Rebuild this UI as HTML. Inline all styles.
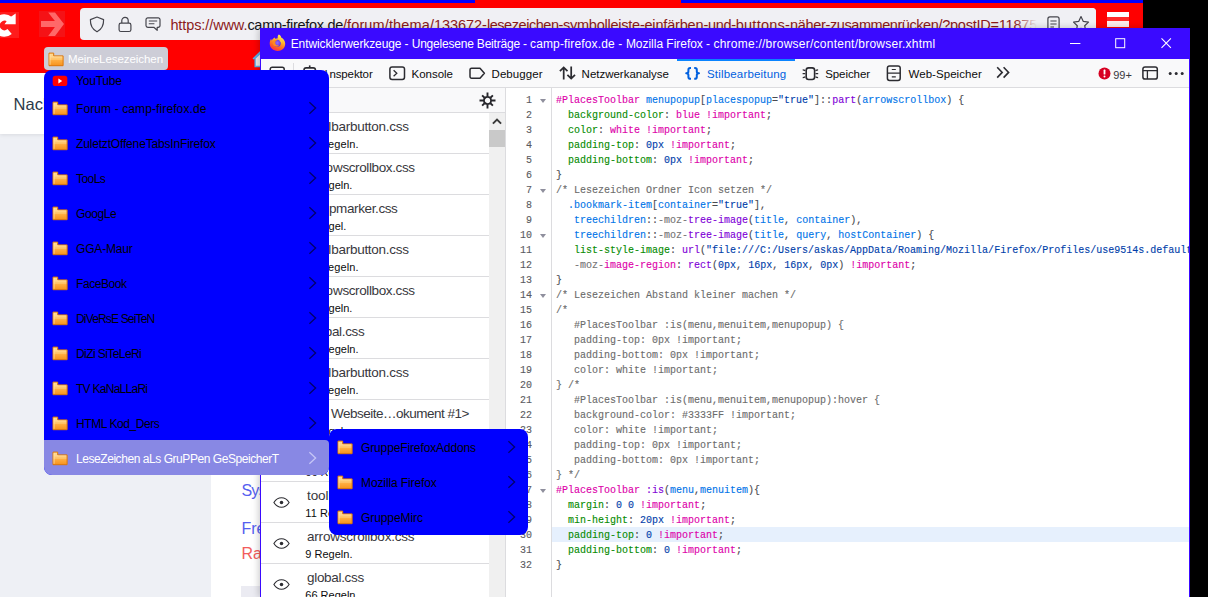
<!DOCTYPE html>
<html lang="de">
<head>
<meta charset="utf-8">
<title>Entwicklerwerkzeuge</title>
<style>
*{box-sizing:border-box;margin:0;padding:0}
html,body{width:1208px;height:597px;overflow:hidden;background:#000}
body{position:relative;font-family:"Liberation Sans",sans-serif;font-size:12px;color:#15141a}
.abs{position:absolute}
.t{position:absolute;white-space:nowrap;line-height:1}
/* ---------- main browser window ---------- */
#win{z-index:0;left:0;top:0;width:1143px;height:597px;background:#eef0f5;overflow:hidden}
#nav{left:0;top:0;width:1143px;height:73px;background:#ff0000}
.strip{top:0;height:3px;background:#0000ff}
#urlbar{left:80px;top:8px;width:1016px;height:32px;background:#f0f0f4;border-radius:4px;overflow:hidden}
#url{left:90.4px;top:9.6px;font-size:14.5px;color:#8b1a1a;letter-spacing:0}
#url b{font-weight:normal;color:#15141a}
#bmbtn{left:44px;top:47px;width:124px;height:23px;background:#cdcdd7;border-radius:4px}
#bmtxt{left:24px;top:7px;font-size:11.5px;color:#fff}
#pagehead{left:0;top:72.500px;width:1143px;height:61.400px;background:#fff;box-shadow:0 1px 4px rgba(0,0,0,.09)}
#pagewhite{left:211px;top:134px;width:940px;height:470px;background:#fff}
/* ---------- menus ---------- */
.menu{z-index:2;background:#0000ff;border-radius:8px}
#m1{left:44px;top:70px;width:285px;height:405px}
#m2{left:329px;top:429px;width:199px;height:105.5px}
.mi{position:absolute;left:0;width:100%;height:35px}
.mi.hlt .lbl{color:#fff}
.mi .lbl{position:absolute;left:32px;top:11.2px;font-size:12px;line-height:14px;white-space:nowrap;color:#000}
.mi svg.f{position:absolute;left:8px;top:10px}
.mi svg.c{position:absolute;right:12px;top:10px}
#hl{left:0;top:370px;width:285px;height:35px;background:#8888e4;border-radius:0 4px 8px 8px}
/* ---------- devtools window ---------- */
#dt{z-index:1;left:260px;top:28px;width:930px;height:569px;background:#fff;border-left:1px solid #3a0aff;border-right:1px solid #3a0aff;overflow:hidden;box-shadow:-1px 0 7px rgba(0,0,0,.22)}
#dttitle{left:0;top:0;width:929px;height:31px;background:#3a0aff}
#dttitletxt{left:29.7px;top:10px;font-size:12px;color:#fff}
#dtbar{left:0;top:31px;width:929px;height:29px;background:#f9f9fa;border-bottom:1px solid #dcdcdf}
.tab{position:absolute;top:8px;font-size:11.5px;line-height:14px;white-space:nowrap;color:#0c0c0d}
#side{left:0;top:60px;width:244px;height:510px;background:#fff}
#sidehead{left:0;top:0;width:244px;height:25px;background:#f9f9fa;border-bottom:1px solid #dcdcdf}
#scroll{left:228px;top:25px;width:16px;height:485px;background:#f0f0f0}
#thumb{left:0;top:17px;width:16px;height:17px;background:#c9c9c9}
#gutter{left:244px;top:60px;width:47px;height:510px;background:#fff;border-left:1px solid #dcdcdf;border-right:1px solid #dcdcdf}
#code{left:291px;top:60px;width:638px;height:510px;background:#fff}
.row{position:absolute;left:0;width:228px;height:41px;border-bottom:1px solid #dcdcdf}
.row .n{position:absolute;left:46px;top:6px;font-size:13.5px;line-height:16px;white-space:nowrap;color:#38383d}
.row .r{position:absolute;left:44.3px;top:24.5px;font-size:11px;line-height:13px;white-space:nowrap;color:#0c0c0d}
.row svg{position:absolute;left:12px;top:15px}
pre{font-family:"Liberation Mono",monospace;font-size:10px;line-height:15px;-webkit-text-stroke:.12px currentColor}
#lines{position:absolute;left:0;top:5px;width:26px;text-align:right;color:#5a5a60}
#src{position:absolute;left:4px;top:5px;color:#4a4a4f}
.k{color:#dd00a9}.p{color:#058b00}.s{color:#0074e8}.a{color:#8000d7}.n{color:#003eaa}.d{color:#0c0c0d}.cm{color:#6c6c6c}.m{color:#737373}
.fold{position:absolute;left:34px;width:0;height:0;border-left:3px solid transparent;border-right:3px solid transparent;border-top:4px solid #8f8f9d}
#curline{left:0;top:439px;width:638px;height:15px;background:#e6f0fd}
#yt{letter-spacing:-0.194px}
#l0{letter-spacing:0.107px}
#l1{letter-spacing:-0.168px}
#l2{letter-spacing:-0.546px}
#l3{letter-spacing:-0.384px}
#l4{letter-spacing:-0.164px}
#l5{letter-spacing:-0.429px}
#l6{letter-spacing:-0.839px}
#l7{letter-spacing:-0.576px}
#l8{letter-spacing:-0.729px}
#l9{letter-spacing:-0.432px}
#l10{letter-spacing:-0.441px}
#s0{letter-spacing:-0.127px}
#s1{letter-spacing:-0.111px}
#s2{letter-spacing:-0.089px}
#t2{letter-spacing:-0.023px}
#t3{letter-spacing:0.086px}
#t4{letter-spacing:-0.012px}
#t5{letter-spacing:0.178px}
#t6{letter-spacing:-0.074px}
#t7{letter-spacing:0.054px}
#r10{letter-spacing:0.012px}
#u1{letter-spacing:-0.098px}
#u2{letter-spacing:-0.289px}
#u3{letter-spacing:0.101px}
#u4{letter-spacing:0.159px}
#u6{letter-spacing:-0.241px}
#r0{letter-spacing:0.101px}
#r3{letter-spacing:0.101px}
#r6{letter-spacing:0.101px}
#r9{letter-spacing:0.101px}
#bmtxt{letter-spacing:-0.057px}
#t1{letter-spacing:-0.114px}
#w1{letter-spacing:-0.108px}
#w2{letter-spacing:-0.202px}
#w3{letter-spacing:0.14px}
#w4{letter-spacing:-0.029px}
#w5{letter-spacing:0.246px}
#ua{letter-spacing:-0.044px}
#ub{letter-spacing:-0.443px}
#uc{letter-spacing:-0.239px}
#ud{letter-spacing:-0.17px}
#ue{letter-spacing:-0.333px}
#uf{letter-spacing:0.237px}
#ug{letter-spacing:-0.32px}
#uh{letter-spacing:-0.438px}
#n0v{letter-spacing:-0.288px}
#n1v{letter-spacing:-0.381px}
#n2v{letter-spacing:-0.38px}
#n3v{letter-spacing:-0.288px}
#n4v{letter-spacing:-0.381px}
#n5v{letter-spacing:-0.319px}
#n6v{letter-spacing:-0.288px}
#n7v{letter-spacing:-0.498px}
#n10{letter-spacing:-0.202px}
#n11{letter-spacing:-0.315px}
#n9{letter-spacing:-0.083px}
#n8{letter-spacing:-0.315px}
#u7{letter-spacing:-0.15px}
</style>
</head>
<body>
<div id="win" class="abs">
  <div id="nav" class="abs"></div>
  <div class="abs" style="left:0;top:12px;width:19px;height:26px;background:#ff1c1c"></div>
  <svg class="abs" style="left:0;top:12px" width="19" height="26" viewBox="0 12 19 26"><path d="M9.64 19.4A8 8 0 1 0 9.64 31.6" fill="none" stroke="#fff" stroke-width="6.6"/><path d="M15.7 13.4V24.3H4.500L9 18z" fill="#fff"/></svg>
  <div class="abs" style="left:39px;top:11px;width:26px;height:26px;background:#f51216"></div>
  <svg class="abs" style="left:39px;top:11px" width="26" height="26" viewBox="39 11 26 26"><path d="M48.2 12.4H55L64 24.1L55 36H48.2L54.900 27.1H41V21.1H54.900z" fill="#ff6868"/></svg>

  <div class="abs strip" style="left:0;width:475px"></div>
  <div class="abs strip" style="left:681px;width:462px"></div>
  <div id="urlbar" class="abs"><div id="fade" class="abs" style="left:934px;top:0;width:28px;height:32px;background:linear-gradient(90deg,rgba(240,240,244,0),#f0f0f4 82%);z-index:2"></div><div class="abs" style="left:962px;top:0;width:54px;height:32px;background:#f0f0f4;z-index:2"></div>
<svg class="abs" style="left:8.5px;top:7.5px" width="16" height="17" viewBox="0 0 16 17"><path d="M8 1L14.6 3.6C14.8 9.4 12.4 13.6 8 15.8C3.6 13.6 1.2 9.4 1.4 3.6z" fill="none" stroke="#45454c" stroke-width="1.2" stroke-linejoin="round"/></svg>
<svg class="abs" style="left:37.5px;top:7.5px" width="14" height="17" viewBox="0 0 14 17"><rect x="1.1" y="7.1" width="11.8" height="8.4" rx="1.8" fill="none" stroke="#45454c" stroke-width="1.2"/><path d="M3.8 7V4.6a3.2 3.2 0 0 1 6.4 0V7" fill="none" stroke="#45454c" stroke-width="1.2"/></svg>
<svg class="abs" style="left:64.5px;top:8.5px" width="16" height="15" viewBox="0 0 16 15"><path d="M2.8 0.9h10.4a1.8 1.8 0 0 1 1.8 1.8v5.8a1.8 1.8 0 0 1-1.8 1.8h-1v3l-3.4-3H2.8a1.8 1.8 0 0 1-1.8-1.8V2.700a1.8 1.8 0 0 1 1.8-1.8z" fill="none" stroke="#45454c" stroke-width="1.2" stroke-linejoin="round"/><path d="M3.8 4h8.400M3.8 6.800h5.600" stroke="#45454c" stroke-width="1.1"/></svg>
<svg class="abs" style="z-index:3;left:966.600px;top:7.5px" width="13" height="17" viewBox="0 0 13 17"><rect x="0.9" y="0.9" width="11.2" height="14.800" rx="2" fill="none" stroke="#45454c" stroke-width="1.2"/><path d="M3.4 5h6.2M3.4 8h6.200M3.400 11h3.600" stroke="#45454c" stroke-width="1.1"/></svg>
<svg class="abs" style="z-index:3;left:991.600px;top:6.5px" width="18" height="18" viewBox="0 0 18 18"><path d="M9 1.600l2.300 4.800 5.200.700-3.800 3.600.95 5.200L9 13.400l-4.650 2.500.95-5.200-3.800-3.600 5.200-.7z" fill="none" stroke="#45454c" stroke-width="1.2" stroke-linejoin="round"/></svg>
<div id="url" class="t"><span id="u1">https://www.</span><b id="u2">camp-firefox.de</b><span id="u3">/forum</span><span id="u4">/thema</span><span id="ua">/133672-</span><span id="ub">lesezeichen-</span><span id="uc">symbolleiste-</span><span id="ud">einfärben-</span><span id="ue">und-</span><span id="uf">buttons-</span><span id="ug">näher-</span><span id="uh">zusammenrücken</span><span id="u6">/?postID=</span><span id="u7">11875</span></div></div>
  <div id="bmbtn" class="abs"><svg class="abs" style="left:3.700px;top:5px" width="17" height="15" viewBox="0 0 17 15"><path d="M1 1.100h4.700v2.800H15.100v9.800H1z" fill="url(#fg)" stroke="#dd7708" stroke-width="1" stroke-linejoin="round"/><path d="M2 2.200v10.600" stroke="#ffe9b4" stroke-width="0.900" opacity=".85"/><path d="M2.500 4.900H14.200" stroke="#ffe6b0" stroke-width="0.800" opacity=".7"/></svg><div id="bmtxt" class="t">MeineLesezeichen</div></div>
  <div class="abs" style="left:1106.800px;top:11.700px;width:21.800px;height:5.100px;background:#fff"></div>
  <div class="abs" style="left:1106.800px;top:16.800px;width:21.800px;height:4.200px;background:#ff2a2a"></div>
  <div class="abs" style="left:1106.800px;top:21px;width:21.800px;height:5.500px;background:#ffecec"></div>
  <svg class="abs" style="left:250px;top:46px" width="24" height="22" viewBox="250 46 24 22"><path d="M255.100 58.200v8.300h14.800v-8.300L262.500 51.200z" fill="#e9e9ee" stroke="#56b0ea" stroke-width="1.300"/><path d="M253.100 59L262.500 50L271.900 59" fill="none" stroke="#56b0ea" stroke-width="1.700"/></svg>
  <div id="pagehead" class="abs"><div class="t" style="left:13.6px;top:23.4px;font-size:16.5px;color:#2c3a4a">Nachrichten</div></div>
  <div id="pagewhite" class="abs"></div>
  <div class="t" style="left:241.400px;top:482.500px;font-size:16px;letter-spacing:-.7px;color:#5560f0">System</div>
  <div class="t" style="left:241.400px;top:521px;font-size:16px;color:#5560f0">Freigabe</div>
  <div class="t" style="left:241.400px;top:545.500px;font-size:16px;color:#f25c5c">Rang</div>
  <div class="abs" style="left:241.200px;top:585.500px;width:300px;height:20px;background:#ebebf2"></div>
</div>

<div id="dt" class="abs">
  <div id="dttitle" class="abs"><svg class="abs" style="left:7.800px;top:6px" width="17" height="18" viewBox="0 0 17 18"><defs><linearGradient id="fx1" x1="0.750" y1="0.050" x2="0.300" y2="1"><stop offset="0" stop-color="#fff060"/><stop offset="0.300" stop-color="#ffbd30"/><stop offset="0.600" stop-color="#ff7a22"/><stop offset="0.850" stop-color="#ff4a2e"/><stop offset="1" stop-color="#f5266a"/></linearGradient><radialGradient id="fx2" cx="0.500" cy="0.450" r="0.600"><stop offset="0" stop-color="#9a6bff"/><stop offset="1" stop-color="#5a2ed8"/></radialGradient></defs><path d="M9.800 0.600C11.200 1.200 12 2.400 12.200 3.400C14.400 4.400 16.200 6.800 16.200 9.800C16.200 14 12.800 17 8.600 17C4.200 17 0.700 13.800 0.700 9.600C0.700 7.400 1.400 5.800 2.200 4.800C2.200 5.600 2.400 6.200 2.800 6.600C3.400 5 4.600 3.800 5.800 3.400C5.800 4 6 4.400 6.400 4.800C7.200 4.400 8 4.200 8.800 4.200C8.400 3 8.800 1.600 9.800 0.600z" fill="url(#fx1)"/><circle cx="8.300" cy="9.300" r="3.500" fill="url(#fx2)"/><path d="M3.800 7.800C4.600 6 6.600 5.600 8.400 6.200C7.200 6.400 6.200 7.400 6.200 8.800C6.200 10.800 8.200 11.800 10 11.200C8.800 12.800 5.600 13 4.200 10.800C3.600 9.800 3.500 8.600 3.800 7.800z" fill="#ff8a1f"/><path d="M10.600 4.800C12.400 5.600 13.400 7.600 13 9.800C12.600 8.400 11.800 7.400 10.400 7C11 6.400 11 5.400 10.600 4.800z" fill="#ffcf3a"/></svg><svg class="abs" style="left:800px;top:0" width="129" height="31" viewBox="0 0 129 31"><path d="M9 15.500h10.400" stroke="#fff" stroke-width="1"/><rect x="54.700" y="10.700" width="9" height="9" fill="none" stroke="#fff" stroke-width="1"/><path d="M100.500 10.400l9.400 9.400M109.900 10.400l-9.400 9.400" stroke="#fff" stroke-width="1.100"/></svg><div id="dttitletxt" class="t"><span id="w1">Entwicklerwerkzeuge - </span><span id="w2">Ungelesene Beiträge - </span><span id="w3">camp-firefox.de - </span><span id="w4">Mozilla Firefox - </span><span id="w5">chrome://browser/content/browser.xhtml</span></div></div>
  <div id="dtbar" class="abs">
    <svg class="abs" style="left:7.8px;top:7px" width="17" height="16" viewBox="0 0 17 16"><path d="M15.2 8V3.2a2 2 0 0 0-2-2H3.2a2 2 0 0 0-2 2v8a2 2 0 0 0 2 2H8" fill="none" stroke="#2b2b30" stroke-width="1.5"/><path d="M9.5 8.5l6 2.4-2.6 1 2.6 2.8-1 1-2.7-2.8-1 2.5z" fill="#2b2b30"/></svg>
    <div class="abs" style="left:32px;top:4px;width:1px;height:20px;background:#dcdcdf"></div>
    <svg class="abs" style="left:42.400px;top:6px" width="14" height="17" viewBox="0 0 14 17"><path d="M6.700 0.400v2.400" stroke="#2b2b30" stroke-width="1.600"/><rect x="1" y="2.900" width="11.400" height="12.400" rx="2.200" fill="none" stroke="#2b2b30" stroke-width="1.600"/></svg>
    <div class="tab" style="left:auto;right:817.400px">I<span id="t1" style="margin-left:1.600px">nspektor</span></div>
    <svg class="abs" style="left:127.8px;top:7px" width="17" height="15" viewBox="0 0 17 15"><rect x="0.9" y="0.9" width="14.6" height="12.6" rx="2.2" fill="none" stroke="#2b2b30" stroke-width="1.5"/><path d="M4.6 4.2L7.8 7.2L4.6 10.2" fill="none" stroke="#2b2b30" stroke-width="1.3"/></svg>
    <div class="tab" id="t2" style="left:150.6px">Konsole</div>
    <svg class="abs" style="left:207.8px;top:8px" width="17" height="13" viewBox="0 0 17 13"><path d="M2.6 1.2h8.4l4.4 5l-4.4 5H2.6a1.6 1.6 0 0 1-1.6-1.6V2.8a1.6 1.6 0 0 1 1.6-1.6z" fill="none" stroke="#2b2b30" stroke-width="1.5" stroke-linejoin="round"/></svg>
    <div class="tab" id="t3" style="left:230.5px">Debugger</div>
    <svg class="abs" style="left:297.800px;top:7px" width="17" height="15" viewBox="0 0 17 15"><path d="M4.700 13.600V1.400M0.900 5.200l3.800-3.800l3.800 3.800M12.200 0.400v12.200M8.400 8.800l3.800 3.800l3.800-3.800" fill="none" stroke="#2b2b30" stroke-width="1.750"/></svg>
    <div class="tab" id="t4" style="left:320.6px">Netzwerkanalyse</div>
    <div class="abs" style="left:415.800px;top:0;width:118.200px;height:2px;background:#0a84ff"></div>
    <svg class="abs" style="left:424.100px;top:7.500px" width="16" height="13" viewBox="0 0 16 13"><path d="M6 1H5.200Q3.400 1 3.400 2.800V4.600Q3.400 6.350 1.200 6.350Q3.400 6.350 3.400 8.100V9.900Q3.400 11.700 5.200 11.700H6M9.200 1H10Q11.800 1 11.800 2.800V4.600Q11.800 6.350 14 6.350Q11.800 6.350 11.800 8.100V9.900Q11.800 11.700 10 11.700H9.200" fill="none" stroke="#0060df" stroke-width="2" stroke-linejoin="round"/></svg>
    <div class="tab" id="t5" style="left:446px;color:#0060df">Stilbearbeitung</div>
    <svg class="abs" style="left:541px;top:8px" width="17" height="14" viewBox="0 0 17 14"><rect x="4.2" y="0.9" width="8.4" height="11.6" rx="2.4" fill="none" stroke="#2b2b30" stroke-width="1.600"/><path d="M0.700 2.800q1.400 0 2.600 .8M0.600 6.700h2.700M0.700 10.600q1.400 0 2.600-.8M16.100 2.800q-1.400 0-2.600 .8M16.200 6.700h-2.700M16.100 10.600q-1.400 0-2.600-.8" fill="none" stroke="#2b2b30" stroke-width="1.300"/></svg>
    <div class="tab" id="t6" style="left:564.2px">Speicher</div>
    <svg class="abs" style="left:624.8px;top:6px" width="16" height="17" viewBox="0 0 16 17"><rect x="1.4" y="0.9" width="12.8" height="14.6" rx="2.2" fill="none" stroke="#2b2b30" stroke-width="1.5"/><path d="M1.4 8.2h12.8M5.800 4.500h4M5.800 11.900h4" stroke="#2b2b30" stroke-width="1.2"/></svg>
    <div class="tab" id="t7" style="left:647.5px">Web-Speicher</div>
    <svg class="abs" style="left:734.900px;top:7.400px" width="15" height="13" viewBox="0 0 15 13"><path d="M1.2 1.2l5 5.2l-5 5.2M7.6 1.2l5 5.2l-5 5.2" fill="none" stroke="#2b2b30" stroke-width="1.6"/></svg>
    <svg class="abs" style="left:836.8px;top:8px" width="13" height="13" viewBox="0 0 13 13"><circle cx="6.5" cy="6.5" r="6" fill="#d70022"/><rect x="5.6" y="2.6" width="1.8" height="5" rx=".6" fill="#fff"/><circle cx="6.5" cy="9.6" r="1" fill="#fff"/></svg>
    <div class="tab" id="t8" style="left:852.200px;font-size:11px;top:8.500px;color:#38383d">99+</div>
    <svg class="abs" style="left:880.600px;top:7px" width="17" height="15" viewBox="0 0 17 15"><rect x="0.9" y="0.9" width="14.4" height="12.2" rx="2.2" fill="none" stroke="#2b2b30" stroke-width="1.5"/><path d="M0.9 4.6h14.4M5.4 4.6v8.5" stroke="#2b2b30" stroke-width="1.3"/></svg>
    <svg class="abs" style="left:906.8px;top:12px" width="17" height="5" viewBox="0 0 17 5"><circle cx="2.2" cy="2.5" r="1.5" fill="#2b2b30"/><circle cx="8.2" cy="2.5" r="1.5" fill="#2b2b30"/><circle cx="14.2" cy="2.5" r="1.5" fill="#2b2b30"/></svg>

  </div>
  <div id="side" class="abs">
<div id="sidehead" class="abs"><svg class="abs" style="left:218.400px;top:3.500px" width="17" height="17" viewBox="0 0 17 17"><circle cx="8.500" cy="8.500" r="3.600" fill="none" stroke="#26262b" stroke-width="1.900"/><path d="M8.500 0.500v3.600M8.500 12.900v3.600M0.500 8.500h3.600M12.900 8.500h3.600M3.100 3.400l2.500 2.300M11.400 11.300l2.500 2.300M3.100 13.600l2.500-2.300M11.400 5.700l2.500-2.300" stroke="#26262b" stroke-width="1.900"/></svg></div>
<div id="scroll" class="abs"><svg class="abs" style="left:3px;top:5px" width="10" height="7" viewBox="0 0 10 7"><path d="M0.900 5.700L5 1.500L9.100 5.700" fill="none" stroke="#3a3a3a" stroke-width="1.900"/></svg><div id="thumb" class="abs"></div></div>
<div class="row" style="top:25px"><svg width="17" height="11" viewBox="0 0 17 11"><path d="M0.9 5.5C3 2.2 5.6 0.8 8.5 0.8S14 2.2 16.1 5.5C14 8.8 11.4 10.2 8.5 10.2S3 8.8 0.9 5.5z" fill="none" stroke="#2b2b30" stroke-width="1.1"/><circle cx="8.5" cy="5.5" r="1.750" fill="#2b2b30"/></svg><span class="n" style="left:auto;right:80.4px">tool<span id="n0v">barbutton.css</span></span><span class="r" id="r0">11 Regeln.</span></div>
<div class="row" style="top:66px"><svg width="17" height="11" viewBox="0 0 17 11"><path d="M0.9 5.5C3 2.2 5.6 0.8 8.5 0.8S14 2.2 16.1 5.5C14 8.8 11.4 10.2 8.5 10.2S3 8.8 0.9 5.5z" fill="none" stroke="#2b2b30" stroke-width="1.1"/><circle cx="8.5" cy="5.5" r="1.750" fill="#2b2b30"/></svg><span class="n" style="left:auto;right:74.3px">arro<span id="n1v">wscrollbox.css</span></span><span class="r" id="r1">9 Regeln.</span></div>
<div class="row" style="top:107px"><svg width="17" height="11" viewBox="0 0 17 11"><path d="M0.9 5.5C3 2.2 5.6 0.8 8.5 0.8S14 2.2 16.1 5.5C14 8.8 11.4 10.2 8.5 10.2S3 8.8 0.9 5.5z" fill="none" stroke="#2b2b30" stroke-width="1.1"/><circle cx="8.5" cy="5.5" r="1.750" fill="#2b2b30"/></svg><span class="n" style="left:auto;right:91.5px">dro<span id="n2v">pmarker.css</span></span><span class="r" id="r2">1 Regel.</span></div>
<div class="row" style="top:148px"><svg width="17" height="11" viewBox="0 0 17 11"><path d="M0.9 5.5C3 2.2 5.6 0.8 8.5 0.8S14 2.2 16.1 5.5C14 8.8 11.4 10.2 8.5 10.2S3 8.8 0.9 5.5z" fill="none" stroke="#2b2b30" stroke-width="1.1"/><circle cx="8.5" cy="5.5" r="1.750" fill="#2b2b30"/></svg><span class="n" style="left:auto;right:80.4px">tool<span id="n3v">barbutton.css</span></span><span class="r" id="r3">11 Regeln.</span></div>
<div class="row" style="top:189px"><svg width="17" height="11" viewBox="0 0 17 11"><path d="M0.9 5.5C3 2.2 5.6 0.8 8.5 0.8S14 2.2 16.1 5.5C14 8.8 11.4 10.2 8.5 10.2S3 8.8 0.9 5.5z" fill="none" stroke="#2b2b30" stroke-width="1.1"/><circle cx="8.5" cy="5.5" r="1.750" fill="#2b2b30"/></svg><span class="n" style="left:auto;right:74.3px">arro<span id="n4v">wscrollbox.css</span></span><span class="r" id="r4">9 Regeln.</span></div>
<div class="row" style="top:230px"><svg width="17" height="11" viewBox="0 0 17 11"><path d="M0.9 5.5C3 2.2 5.6 0.8 8.5 0.8S14 2.2 16.1 5.5C14 8.8 11.4 10.2 8.5 10.2S3 8.8 0.9 5.5z" fill="none" stroke="#2b2b30" stroke-width="1.1"/><circle cx="8.5" cy="5.5" r="1.750" fill="#2b2b30"/></svg><span class="n" style="left:auto;right:124.5px">glo<span id="n5v">bal.css</span></span><span class="r" id="r5">66 Regeln.</span></div>
<div class="row" style="top:271px"><svg width="17" height="11" viewBox="0 0 17 11"><path d="M0.9 5.5C3 2.2 5.6 0.8 8.5 0.8S14 2.2 16.1 5.5C14 8.8 11.4 10.2 8.5 10.2S3 8.8 0.9 5.5z" fill="none" stroke="#2b2b30" stroke-width="1.1"/><circle cx="8.5" cy="5.5" r="1.750" fill="#2b2b30"/></svg><span class="n" style="left:auto;right:80.4px">tool<span id="n6v">barbutton.css</span></span><span class="r" id="r6">11 Regeln.</span></div>
<div class="row" style="top:312px"><svg width="17" height="11" viewBox="0 0 17 11"><path d="M0.9 5.5C3 2.2 5.6 0.8 8.5 0.8S14 2.2 16.1 5.5C14 8.8 11.4 10.2 8.5 10.2S3 8.8 0.9 5.5z" fill="none" stroke="#2b2b30" stroke-width="1.1"/><circle cx="8.5" cy="5.5" r="1.750" fill="#2b2b30"/></svg><span class="n" style="left:auto;right:20.1px">&lt;In <span id="n7v">Webseite…okument #1&gt;</span></span><span class="r" id="r7">0 Regeln.</span></div>
<div class="row" style="top:353px"><svg width="17" height="11" viewBox="0 0 17 11"><path d="M0.9 5.5C3 2.2 5.6 0.8 8.5 0.8S14 2.2 16.1 5.5C14 8.8 11.4 10.2 8.5 10.2S3 8.8 0.9 5.5z" fill="none" stroke="#2b2b30" stroke-width="1.1"/><circle cx="8.5" cy="5.5" r="1.750" fill="#2b2b30"/></svg><span class="n" id="n8">global.css</span><span class="r" id="r8">66 Regeln.</span></div>
<div class="row" style="top:394px"><svg width="17" height="11" viewBox="0 0 17 11"><path d="M0.9 5.5C3 2.2 5.6 0.8 8.5 0.8S14 2.2 16.1 5.5C14 8.8 11.4 10.2 8.5 10.2S3 8.8 0.9 5.5z" fill="none" stroke="#2b2b30" stroke-width="1.1"/><circle cx="8.5" cy="5.5" r="1.750" fill="#2b2b30"/></svg><span class="n" id="n9">toolbarbutton.css</span><span class="r" id="r9">11 Regeln.</span></div>
<div class="row" style="top:435px"><svg width="17" height="11" viewBox="0 0 17 11"><path d="M0.9 5.5C3 2.2 5.6 0.8 8.5 0.8S14 2.2 16.1 5.5C14 8.8 11.4 10.2 8.5 10.2S3 8.8 0.9 5.5z" fill="none" stroke="#2b2b30" stroke-width="1.1"/><circle cx="8.5" cy="5.5" r="1.750" fill="#2b2b30"/></svg><span class="n" id="n10">arrowscrollbox.css</span><span class="r" id="r10">9 Regeln.</span></div>
<div class="row" style="top:476px"><svg width="17" height="11" viewBox="0 0 17 11"><path d="M0.9 5.5C3 2.2 5.6 0.8 8.5 0.8S14 2.2 16.1 5.5C14 8.8 11.4 10.2 8.5 10.2S3 8.8 0.9 5.5z" fill="none" stroke="#2b2b30" stroke-width="1.1"/><circle cx="8.5" cy="5.5" r="1.750" fill="#2b2b30"/></svg><span class="n" id="n11">global.css</span><span class="r" id="r11">66 Regeln.</span></div>
  </div>
  <div id="gutter" class="abs"><pre id="lines">1
2
3
4
5
6
7
8
9
10
11
12
13
14
15
16
17
18
19
20
21
22
23
24
25
26
27
28
29
30
31
32</pre>
<div class="fold" style="top:11px"></div>
<div class="fold" style="top:101px"></div>
<div class="fold" style="top:146px"></div>
<div class="fold" style="top:206px"></div>
<div class="fold" style="top:401px"></div></div>
  <div id="code" class="abs"><div id="curline" class="abs"></div>
<pre id="src"><span class="k">#PlacesToolbar</span> <span class="s">menupopup</span>[<span class="s">placespopup</span>=<span class="n">"true"</span>]::<span class="a">part</span>(<span class="s">arrowscrollbox</span>) {
  <span class="p">background-color</span>: <span class="k">blue</span> <span class="k">!important</span>;
  <span class="p">color</span>: <span class="k">white</span> <span class="k">!important</span>;
  <span class="p">padding-top</span>: <span class="n">0px</span> <span class="k">!important</span>;
  <span class="p">padding-bottom</span>: <span class="n">0px</span> <span class="k">!important</span>;
}
<span class="cm">/* Lesezeichen Ordner Icon setzen */</span>
  <span class="s">.bookmark-item</span>[<span class="s">container</span>=<span class="n">"true"</span>],
   <span class="s">treechildren</span>::<span class="m">-moz-</span><span class="a">tree-image</span>(<span class="s">title</span>, <span class="s">container</span>),
   <span class="s">treechildren</span>::<span class="m">-moz-</span><span class="a">tree-image</span>(<span class="s">title</span>, <span class="s">query</span>, <span class="s">hostContainer</span>) {
   <span class="p">list-style-image</span>: <span class="a">url</span>(<span class="n">"file:///C:/Users/askas/AppData/Roaming/Mozilla/Firefox/Profiles/use9514s.default-release/chrome/icons/folder.png"</span>)
   <span class="m">-moz-</span><span class="k">image-region</span>: <span class="a">rect</span>(<span class="n">0px</span>, <span class="n">16px</span>, <span class="n">16px</span>, <span class="n">0px</span>) <span class="k">!important</span>;
}
<span class="cm">/* Lesezeichen Abstand kleiner machen */</span>
<span class="cm">/*</span>
<span class="cm">   #PlacesToolbar :is(menu,menuitem,menupopup) {</span>
<span class="cm">   padding-top: 0px !important;</span>
<span class="cm">   padding-bottom: 0px !important;</span>
<span class="cm">   color: white !important;</span>
<span class="cm">} /*</span>
<span class="cm">   #PlacesToolbar :is(menu,menuitem,menupopup):hover {</span>
<span class="cm">   background-color: #3333FF !important;</span>
<span class="cm">   color: white !important;</span>
<span class="cm">   padding-top: 0px !important;</span>
<span class="cm">   padding-bottom: 0px !important;</span>
<span class="cm">} */</span>
<span class="k">#PlacesToolbar</span> <span class="a">:is</span>(<span class="s">menu</span>,<span class="s">menuitem</span>){
  <span class="p">margin</span>: <span class="n">0</span> <span class="n">0</span> <span class="k">!important</span>;
  <span class="p">min-height</span>: <span class="n">20px</span> <span class="k">!important</span>;
  <span class="p">padding-top</span>: <span class="n">0</span> <span class="k">!important</span>;
  <span class="p">padding-bottom</span>: <span class="n">0</span> <span class="k">!important</span>;
}</pre></div>
</div>

<div id="m1" class="abs menu"><div id="hl" class="abs"></div>
<div class="mi" style="top:0.5px;height:20px"><svg class="abs" style="left:8.400px;top:4px" width="16" height="12" viewBox="0 0 16 12"><rect x="0.7" y="0.8" width="14.6" height="10.2" rx="2.6" fill="#ff0000"/><path d="M6.4 3.4L10.2 5.9L6.4 8.4z" fill="#fff"/></svg><span class="lbl" style="top:3.1px" id="yt">YouTube</span></div>
<div class="mi" style="top:20.5px"><svg class="f" width="17" height="15" viewBox="0 0 17 15"><defs><linearGradient id="fg" x1="0" y1="0" x2="0" y2="1"><stop offset="0" stop-color="#ffdf9c"/><stop offset="0.52" stop-color="#ffc163"/><stop offset="0.56" stop-color="#ffae42"/><stop offset="1" stop-color="#f7921c"/></linearGradient></defs><path d="M1 1.100h4.700v2.800H15.100v9.800H1z" fill="url(#fg)" stroke="#dd7708" stroke-width="1" stroke-linejoin="round"/><path d="M2 2.200v10.600" stroke="#ffe9b4" stroke-width="0.900" opacity=".85"/><path d="M2.500 4.900H14.200" stroke="#ffe6b0" stroke-width="0.800" opacity=".7"/></svg><span class="lbl" id="l0">Forum - camp-firefox.de</span><svg class="c" width="9" height="14" viewBox="0 0 9 14"><path d="M1.4 1.2L7.6 7L1.4 12.8" fill="none" stroke="#00006a" stroke-width="1.3"/></svg></div>
<div class="mi" style="top:55.5px"><svg class="f" width="17" height="15" viewBox="0 0 17 15"><path d="M1 1.100h4.700v2.800H15.100v9.800H1z" fill="url(#fg)" stroke="#dd7708" stroke-width="1" stroke-linejoin="round"/><path d="M2 2.200v10.600" stroke="#ffe9b4" stroke-width="0.900" opacity=".85"/><path d="M2.500 4.900H14.200" stroke="#ffe6b0" stroke-width="0.800" opacity=".7"/></svg><span class="lbl" id="l1">ZuletztOffeneTabsInFirefox</span><svg class="c" width="9" height="14" viewBox="0 0 9 14"><path d="M1.4 1.2L7.6 7L1.4 12.8" fill="none" stroke="#00006a" stroke-width="1.3"/></svg></div>
<div class="mi" style="top:90.5px"><svg class="f" width="17" height="15" viewBox="0 0 17 15"><path d="M1 1.100h4.700v2.800H15.100v9.800H1z" fill="url(#fg)" stroke="#dd7708" stroke-width="1" stroke-linejoin="round"/><path d="M2 2.200v10.600" stroke="#ffe9b4" stroke-width="0.900" opacity=".85"/><path d="M2.500 4.900H14.200" stroke="#ffe6b0" stroke-width="0.800" opacity=".7"/></svg><span class="lbl" id="l2">TooLs</span><svg class="c" width="9" height="14" viewBox="0 0 9 14"><path d="M1.4 1.2L7.6 7L1.4 12.8" fill="none" stroke="#00006a" stroke-width="1.3"/></svg></div>
<div class="mi" style="top:125.5px"><svg class="f" width="17" height="15" viewBox="0 0 17 15"><path d="M1 1.100h4.700v2.800H15.100v9.800H1z" fill="url(#fg)" stroke="#dd7708" stroke-width="1" stroke-linejoin="round"/><path d="M2 2.200v10.600" stroke="#ffe9b4" stroke-width="0.900" opacity=".85"/><path d="M2.500 4.900H14.200" stroke="#ffe6b0" stroke-width="0.800" opacity=".7"/></svg><span class="lbl" id="l3">GoogLe</span><svg class="c" width="9" height="14" viewBox="0 0 9 14"><path d="M1.4 1.2L7.6 7L1.4 12.8" fill="none" stroke="#00006a" stroke-width="1.3"/></svg></div>
<div class="mi" style="top:160.5px"><svg class="f" width="17" height="15" viewBox="0 0 17 15"><path d="M1 1.100h4.700v2.800H15.100v9.800H1z" fill="url(#fg)" stroke="#dd7708" stroke-width="1" stroke-linejoin="round"/><path d="M2 2.200v10.600" stroke="#ffe9b4" stroke-width="0.900" opacity=".85"/><path d="M2.500 4.900H14.200" stroke="#ffe6b0" stroke-width="0.800" opacity=".7"/></svg><span class="lbl" id="l4">GGA-Maur</span><svg class="c" width="9" height="14" viewBox="0 0 9 14"><path d="M1.4 1.2L7.6 7L1.4 12.8" fill="none" stroke="#00006a" stroke-width="1.3"/></svg></div>
<div class="mi" style="top:195.5px"><svg class="f" width="17" height="15" viewBox="0 0 17 15"><path d="M1 1.100h4.700v2.800H15.100v9.800H1z" fill="url(#fg)" stroke="#dd7708" stroke-width="1" stroke-linejoin="round"/><path d="M2 2.200v10.600" stroke="#ffe9b4" stroke-width="0.900" opacity=".85"/><path d="M2.500 4.900H14.200" stroke="#ffe6b0" stroke-width="0.800" opacity=".7"/></svg><span class="lbl" id="l5">FaceBook</span><svg class="c" width="9" height="14" viewBox="0 0 9 14"><path d="M1.4 1.2L7.6 7L1.4 12.8" fill="none" stroke="#00006a" stroke-width="1.3"/></svg></div>
<div class="mi" style="top:230.5px"><svg class="f" width="17" height="15" viewBox="0 0 17 15"><path d="M1 1.100h4.700v2.800H15.100v9.800H1z" fill="url(#fg)" stroke="#dd7708" stroke-width="1" stroke-linejoin="round"/><path d="M2 2.200v10.600" stroke="#ffe9b4" stroke-width="0.900" opacity=".85"/><path d="M2.500 4.900H14.200" stroke="#ffe6b0" stroke-width="0.800" opacity=".7"/></svg><span class="lbl" id="l6">DiVeRsE SeiTeN</span><svg class="c" width="9" height="14" viewBox="0 0 9 14"><path d="M1.4 1.2L7.6 7L1.4 12.8" fill="none" stroke="#00006a" stroke-width="1.3"/></svg></div>
<div class="mi" style="top:265.5px"><svg class="f" width="17" height="15" viewBox="0 0 17 15"><path d="M1 1.100h4.700v2.800H15.100v9.800H1z" fill="url(#fg)" stroke="#dd7708" stroke-width="1" stroke-linejoin="round"/><path d="M2 2.200v10.600" stroke="#ffe9b4" stroke-width="0.900" opacity=".85"/><path d="M2.500 4.900H14.200" stroke="#ffe6b0" stroke-width="0.800" opacity=".7"/></svg><span class="lbl" id="l7">DiZi SiTeLeRi</span><svg class="c" width="9" height="14" viewBox="0 0 9 14"><path d="M1.4 1.2L7.6 7L1.4 12.8" fill="none" stroke="#00006a" stroke-width="1.3"/></svg></div>
<div class="mi" style="top:300.5px"><svg class="f" width="17" height="15" viewBox="0 0 17 15"><path d="M1 1.100h4.700v2.800H15.100v9.800H1z" fill="url(#fg)" stroke="#dd7708" stroke-width="1" stroke-linejoin="round"/><path d="M2 2.200v10.600" stroke="#ffe9b4" stroke-width="0.900" opacity=".85"/><path d="M2.500 4.900H14.200" stroke="#ffe6b0" stroke-width="0.800" opacity=".7"/></svg><span class="lbl" id="l8">TV KaNaLLaRi</span><svg class="c" width="9" height="14" viewBox="0 0 9 14"><path d="M1.4 1.2L7.6 7L1.4 12.8" fill="none" stroke="#00006a" stroke-width="1.3"/></svg></div>
<div class="mi" style="top:335.5px"><svg class="f" width="17" height="15" viewBox="0 0 17 15"><path d="M1 1.100h4.700v2.800H15.100v9.800H1z" fill="url(#fg)" stroke="#dd7708" stroke-width="1" stroke-linejoin="round"/><path d="M2 2.200v10.600" stroke="#ffe9b4" stroke-width="0.900" opacity=".85"/><path d="M2.500 4.900H14.200" stroke="#ffe6b0" stroke-width="0.800" opacity=".7"/></svg><span class="lbl" id="l9">HTML Kod_Ders</span><svg class="c" width="9" height="14" viewBox="0 0 9 14"><path d="M1.4 1.2L7.6 7L1.4 12.8" fill="none" stroke="#00006a" stroke-width="1.3"/></svg></div>
<div class="mi hlt" style="top:370.5px"><svg class="f" width="17" height="15" viewBox="0 0 17 15"><path d="M1 1.100h4.700v2.800H15.100v9.800H1z" fill="url(#fg)" stroke="#dd7708" stroke-width="1" stroke-linejoin="round"/><path d="M2 2.200v10.600" stroke="#ffe9b4" stroke-width="0.900" opacity=".85"/><path d="M2.500 4.900H14.200" stroke="#ffe6b0" stroke-width="0.800" opacity=".7"/></svg><span class="lbl" id="l10">LeseZeichen aLs GruPPen GeSpeicherT</span><svg class="c" width="9" height="14" viewBox="0 0 9 14"><path d="M1.4 1.2L7.6 7L1.4 12.8" fill="none" stroke="#c6c6f6" stroke-width="1.3"/></svg></div>
</div>
<div id="m2" class="abs menu">
<div class="mi" style="top:0.5px"><svg class="f" width="17" height="15" viewBox="0 0 17 15"><path d="M1 1.100h4.700v2.800H15.100v9.800H1z" fill="url(#fg)" stroke="#dd7708" stroke-width="1" stroke-linejoin="round"/><path d="M2 2.200v10.600" stroke="#ffe9b4" stroke-width="0.900" opacity=".85"/><path d="M2.500 4.900H14.200" stroke="#ffe6b0" stroke-width="0.800" opacity=".7"/></svg><span class="lbl" id="s0">GruppeFirefoxAddons</span><svg class="c" width="9" height="14" viewBox="0 0 9 14"><path d="M1.4 1.2L7.6 7L1.4 12.8" fill="none" stroke="#00006a" stroke-width="1.3"/></svg></div>
<div class="mi" style="top:35.5px"><svg class="f" width="17" height="15" viewBox="0 0 17 15"><path d="M1 1.100h4.700v2.800H15.100v9.800H1z" fill="url(#fg)" stroke="#dd7708" stroke-width="1" stroke-linejoin="round"/><path d="M2 2.200v10.600" stroke="#ffe9b4" stroke-width="0.900" opacity=".85"/><path d="M2.500 4.900H14.200" stroke="#ffe6b0" stroke-width="0.800" opacity=".7"/></svg><span class="lbl" id="s1">Mozilla Firefox</span><svg class="c" width="9" height="14" viewBox="0 0 9 14"><path d="M1.4 1.2L7.6 7L1.4 12.8" fill="none" stroke="#00006a" stroke-width="1.3"/></svg></div>
<div class="mi" style="top:70.5px"><svg class="f" width="17" height="15" viewBox="0 0 17 15"><path d="M1 1.100h4.700v2.800H15.100v9.800H1z" fill="url(#fg)" stroke="#dd7708" stroke-width="1" stroke-linejoin="round"/><path d="M2 2.200v10.600" stroke="#ffe9b4" stroke-width="0.900" opacity=".85"/><path d="M2.500 4.900H14.200" stroke="#ffe6b0" stroke-width="0.800" opacity=".7"/></svg><span class="lbl" id="s2">GruppeMirc</span><svg class="c" width="9" height="14" viewBox="0 0 9 14"><path d="M1.4 1.2L7.6 7L1.4 12.8" fill="none" stroke="#00006a" stroke-width="1.3"/></svg></div>
</div>
</body>
</html>
